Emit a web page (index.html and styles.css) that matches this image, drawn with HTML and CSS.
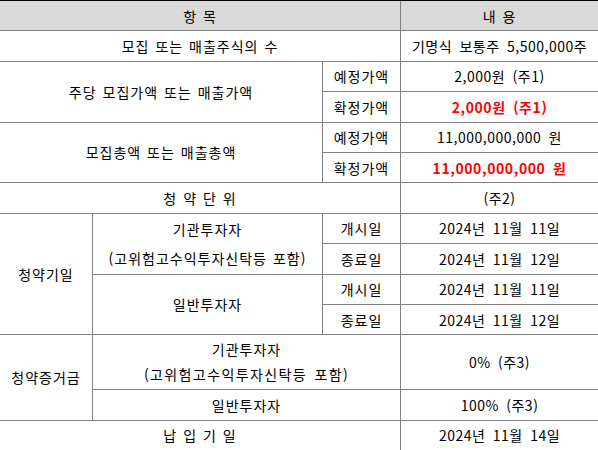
FILE: index.html
```html
<!DOCTYPE html>
<html lang="ko">
<head>
<meta charset="utf-8">
<title>청약 개요</title>
<link rel="stylesheet" href="styles.css">
</head>
<body>
<div class="sheet">
  <div class="cell head c13">항 목</div>
  <div class="cell head c4">내 용</div>

  <div class="cell lbl c13">모집 또는 매출주식의 수</div>
  <div class="cell val c4">기명식 보통주 5,500,000주</div>

  <div class="cell lbl c12 r2">주당 모집가액 또는 매출가액</div>
  <div class="cell lbl c3">예정가액</div>
  <div class="cell val c4">2,000원 (주1)</div>
  <div class="cell lbl c3">확정가액</div>
  <div class="cell val c4 red">2,000원 (주1)</div>

  <div class="cell lbl c12 r2">모집총액 또는 매출총액</div>
  <div class="cell lbl c3">예정가액</div>
  <div class="cell val c4">11,000,000,000 원</div>
  <div class="cell lbl c3">확정가액</div>
  <div class="cell val c4 red">11,000,000,000 원</div>

  <div class="cell lbl c13">청 약 단 위</div>
  <div class="cell val c4">(주2)</div>

  <div class="cell lbl c1 r4">청약기일</div>
  <div class="cell lbl c2 r2 two tall">기관투자자<br>(고위험고수익투자신탁등 포함)</div>
  <div class="cell lbl c3">개시일</div>
  <div class="cell val c4">2024년 11월 11일</div>
  <div class="cell lbl c3">종료일</div>
  <div class="cell val c4">2024년 11월 12일</div>
  <div class="cell lbl c2 r2">일반투자자</div>
  <div class="cell lbl c3">개시일</div>
  <div class="cell val c4">2024년 11월 11일</div>
  <div class="cell lbl c3">종료일</div>
  <div class="cell val c4">2024년 11월 12일</div>

  <div class="cell lbl c1 r2">청약증거금</div>
  <div class="cell lbl c23 two short">기관투자자<br><span class="spread">(고위험고수익투자신탁등 포함)</span></div>
  <div class="cell val c4">0% (주3)</div>
  <div class="cell lbl c23">일반투자자</div>
  <div class="cell val c4">100% (주3)</div>

  <div class="cell lbl c13">납 입 기 일</div>
  <div class="cell val c4">2024년 11월 14일</div>
</div>
</body>
</html>
```

FILE: styles.css
```css
html, body {
  margin: 0;
  padding: 0;
  background: #ffffff;
}

body {
  font-family: "Noto Sans CJK KR", "Noto Sans", sans-serif;
  font-size: 14px;
  color: #000000;
}

.sheet {
  width: 598px;
  display: grid;
  grid-template-columns: 92px 229px 77px 197px;
  grid-template-rows: repeat(11, 29.4px) 54px 29.4px 29.4px;
  gap: 1px;
  background: #808080;
  border-top: 1px solid #000000;
  border-bottom: 1px solid #808080;
}

.cell {
  background: #ffffff;
  display: flex;
  align-items: center;
  justify-content: center;
  text-align: center;
  white-space: nowrap;
  line-height: 1;
}

.head {
  background: #d9d9d9;
  letter-spacing: 1px;
  word-spacing: 1px;
}

.lbl {
  letter-spacing: 1px;
  word-spacing: 1px;
}

.val {
  letter-spacing: 0.5px;
  word-spacing: 3px;
}

.red {
  color: #ff0000;
  font-weight: bold;
  letter-spacing: 0.6px;
}

.two {
  flex-direction: column;
}

.tall {
  line-height: 29px;
}

.short {
  line-height: 25px;
}

.spread {
  letter-spacing: 1.4px;
  word-spacing: 2px;
}

.c1 { grid-column: 1 / 2; }
.c2 { grid-column: 2 / 3; }
.c3 { grid-column: 3 / 4; }
.c4 { grid-column: 4 / 5; }
.c12 { grid-column: 1 / 3; }
.c13 { grid-column: 1 / 4; }
.c23 { grid-column: 2 / 4; }

.r2 { grid-row: span 2; }
.r4 { grid-row: span 4; }
```
